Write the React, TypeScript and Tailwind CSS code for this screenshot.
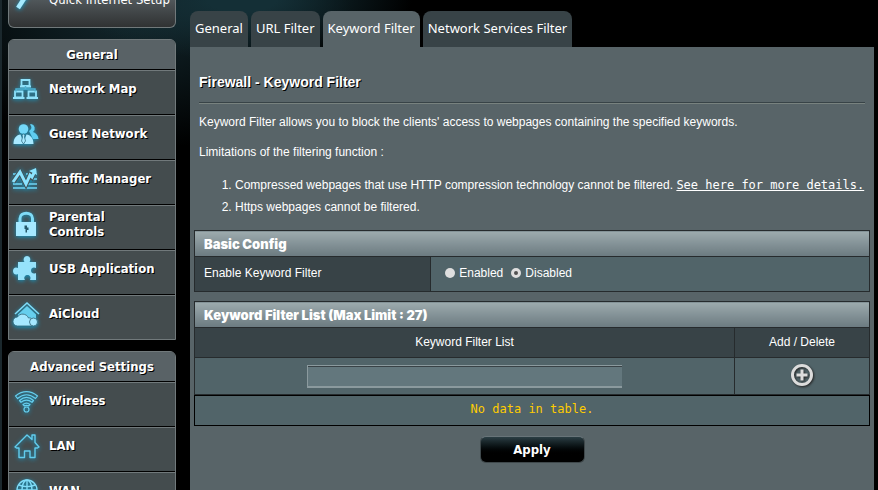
import type { ReactNode } from "react"

type MenuItem = { label: string; icon: ReactNode }

const tabs = ["General", "URL Filter", "Keyword Filter", "Network Services Filter"]

const glow = "h-[30px] w-[30px] shrink-0 drop-shadow-[0_1px_2px_#1599c4]"

function WandIcon() {
    return (
        <svg viewBox="0 0 30 30" className={glow} fill="none">
            <path d="M7 23 18 6" stroke="#a5eaff" strokeWidth="4.500" />
        </svg>
    )
}

function MapIcon() {
    return (
        <svg viewBox="0 0 30 30" className={glow} fill="none" stroke="#8fe2fb" strokeWidth="1.800">
            <path d="M10.500 6h8v6h-8zM4 17.500h7.500v6H4zM17.500 17.500H25v6h-7.500z" />
            <path d="M9 12.500h11M2 24h11.500M15.500 24H27" />
            <path d="M14.500 12v3M5 17.500V15h19v2.500" stroke="#4fb4d4" strokeWidth="1.500" />
        </svg>
    )
}

function GuestIcon() {
    return (
        <svg viewBox="0 0 30 30" className={glow}>
            <path d="M20 5a4.500 4.500 0 0 1 2 8c3 1 5 3 5.500 7H22l-4-8c3-2 3-4 1-6.500z" fill="#5fcdf0" />
            <circle cx="12.500" cy="10" r="4.800" fill="#74d8f8" />
            <path d="M2.500 25c0-6 3-9 7-9.500l3 8 3-8c4 .5 7 3.500 7 9.500z" fill="#a8e9ff" />
            <path d="m11 16 1.500-1 1.500 1-.5 2 1 4-2 3-2-3 1-4z" fill="#a8e9ff" stroke="#2a6478" strokeWidth=".7" />
        </svg>
    )
}

function TrafficIcon() {
    return (
        <svg viewBox="0 0 30 30" className={glow} fill="none" stroke="#6fd6f8">
            <path d="M2 10h3M15 10h4M2 15h3M21 15h5M2 20h9M17 20h9M2 24h24" strokeWidth="1.700" />
            <path d="m2 18 7-10 6 12 4-9 2 2 3-6" stroke="#455053" strokeWidth="5" />
            <path d="m2 18 7-10 6 12 4-9 2 2 3-6" stroke="#8ae3ff" strokeWidth="3" />
            <path d="m18 7 7-3 1 7z" fill="#8ae3ff" stroke="none" />
        </svg>
    )
}

function LockIcon() {
    return (
        <svg viewBox="0 0 30 30" className={glow} fill="none">
            <path d="M9 14V9.500c0-7 12.500-7 12.500 0V14" stroke="#7fdcf8" strokeWidth="3" />
            <path d="M5 13h20v14H5z" fill="#a5e8ff" />
            <path d="M13.500 16.500H16v2h1.500V21H16v2.500h-1.500V20h-1z" fill="#24586a" />
        </svg>
    )
}

function PuzzleIcon() {
    return (
        <svg viewBox="0 0 30 30" className={glow}>
            <path
                d="M7 8h6.500c-2-3 0-6 2.500-6s4.500 3 2.500 6H25v6c-2.500-1.500-5 0-5 2.500s2.500 4 5 2.500v7h-6c1.500-3-.5-5-2.500-5s-4.500 2-2.500 5H7v-6c-3 1.500-5-.5-5-3s2-4.500 5-3z"
                fill="#96e2fb"
            />
        </svg>
    )
}

function CloudHomeIcon() {
    return (
        <svg viewBox="0 0 30 30" className={glow}>
            <path d="m4 15 12-11 12 11" fill="none" stroke="#7fdcf8" strokeWidth="1.600" />
            <path d="m7 15.500 9-8.500 9 8.500V24H7z" fill="#66cfee" />
            <path
                d="M6.500 27c-6 0-6-9 0-9 2-4 9-4 11 1 2-.5 3 .5 3.500 1.500V27z"
                fill="#a5e8ff"
                stroke="#2f6375"
                strokeWidth=".8"
            />
            <circle cx="22.500" cy="23" r="4" fill="#a5e8ff" stroke="#2f6375" strokeWidth=".8" />
        </svg>
    )
}

function WifiIcon() {
    return (
        <svg viewBox="0 0 30 30" className={glow} fill="none" stroke="#66cfef" strokeWidth="1.200" strokeLinejoin="round">
            <path d="M4.500 10c7-5.500 15-5.500 22 0l-2 2.500c-6-5-12-5-18 0z" />
            <path d="M8.500 14.500c4.500-4 9.500-4 14 0L21 16.300c-4-3-7-3-11 0z" />
            <path d="M12 18.500c2.500-2 4.500-2 7 0L17.500 20c-1.500-1-2.500-1-4 0z" />
            <circle cx="15.500" cy="23.500" r="2.500" />
        </svg>
    )
}

function HouseIcon() {
    return (
        <svg viewBox="0 0 30 30" className={glow} fill="none" stroke="#62cdee" strokeWidth="1.400" strokeLinejoin="round">
            <path d="M4 16 16 4l5 4.500V4h3v7.500l4 4.500-1.500 1H24v9.500h-5V20h-5.500v6.500H8V17H5.500z" />
        </svg>
    )
}

function GlobeIcon() {
    return (
        <svg viewBox="0 0 30 30" className={glow} fill="none" stroke="#7fdcf8" strokeWidth="1.400">
            <circle cx="16" cy="14" r="10" />
            <ellipse cx="16" cy="14" rx="5" ry="10" />
            <path d="M16 4v20M6 14h20M8 9c5 2 11 2 16 0M8 19c5-2 11-2 16 0" />
        </svg>
    )
}

const general: MenuItem[] = [
    { label: "Network Map", icon: <MapIcon /> },
    { label: "Guest Network", icon: <GuestIcon /> },
    { label: "Traffic Manager", icon: <TrafficIcon /> },
    { label: "Parental Controls", icon: <LockIcon /> },
    { label: "USB Application", icon: <PuzzleIcon /> },
    { label: "AiCloud", icon: <CloudHomeIcon /> },
]

const advanced: MenuItem[] = [
    { label: "Wireless", icon: <WifiIcon /> },
    { label: "LAN", icon: <HouseIcon /> },
    { label: "WAN", icon: <GlobeIcon /> },
]

function Menu({ title, items }: { title: string; items: MenuItem[] }) {
    return (
        <nav className="shrink-0 overflow-hidden rounded-t-md border border-[#71797b] bg-[#444c4e]">
            <h2 className="flex h-[30px] items-center justify-center border-b border-black bg-[#596266] text-[13px]">
                {title}
            </h2>
            {items.map((item) => (
                <a
                    key={item.label}
                    href="#"
                    className="flex h-[45px] items-center gap-2 border-t border-b border-t-[#71797b] border-b-black pr-4 pb-2 pl-0.5 last:h-11 last:border-b-0"
                >
                    {item.icon}
                    <span className="text-[13px] leading-[15px]">{item.label}</span>
                </a>
            ))}
        </nav>
    )
}

function Sidebar() {
    return (
        <aside className="flex w-[168px] shrink-0 flex-col gap-[11px] font-['DejaVu_Sans_Condensed','DejaVu_Sans',sans-serif] font-bold text-white text-shadow-[1px_1px_0_#000]">
            <a
                href="#"
                className="flex h-7 shrink-0 items-end overflow-hidden rounded-b-md border border-t-0 border-[#71797b] bg-linear-to-b from-[#50575a] to-[#303233]"
            >
                <span className="flex items-center gap-2 pb-3 pl-0.5">
                    <WandIcon />
                    <span className="text-[13px] font-normal whitespace-nowrap text-shadow-none">Quick Internet Setup</span>
                </span>
            </a>
            <Menu title="General" items={general} />
            <Menu title="Advanced Settings" items={advanced} />
        </aside>
    )
}

function AddIcon() {
    return (
        <svg viewBox="0 0 24 24" className="h-6 w-6 drop-shadow-[1px_1px_1px_#222]" fill="none">
            <circle cx="12" cy="12" r="9.500" stroke="#dcdcdc" strokeWidth="3" />
            <path d="M12 6.500v11M6.500 12h11" stroke="#dcdcdc" strokeWidth="3" />
        </svg>
    )
}

const heading =
    "h-[26px] border border-[#262b2d] bg-linear-to-b from-[#9dabae] to-[#6b7a80] px-[9px] text-left font-['Inter',sans-serif] text-[13px] leading-4 font-black"
const darkCell = "border border-[#262b2d] bg-[#384347]"
const lightCell = "border border-[#262b2d] bg-[#516469]"
const radio =
    "h-[10px] w-[10px] appearance-none rounded-full bg-[#dedede] checked:border-[3px] checked:border-[#dedede] checked:bg-[#505050]"

function BasicConfig() {
    return (
        <table className="w-full border-collapse">
            <thead>
                <tr>
                    <th colSpan={2} className={heading}>Basic Config</th>
                </tr>
            </thead>
            <tbody>
                <tr className="h-[35px]">
                    <th className={`${darkCell} w-[35%] px-[9px] pb-0.5 text-left font-normal`}>Enable Keyword Filter</th>
                    <td className={`${lightCell} px-3.5 pb-0.5`}>
                        <div className="flex items-center gap-2">
                            <label className="flex items-center gap-1">
                                <input type="radio" name="keyword_filter" className={radio} />
                                Enabled
                            </label>
                            <label className="flex items-center gap-1">
                                <input type="radio" name="keyword_filter" defaultChecked className={radio} />
                                Disabled
                            </label>
                        </div>
                    </td>
                </tr>
            </tbody>
        </table>
    )
}

function KeywordList() {
    return (
        <div>
            <table className="w-full border-collapse">
                <thead>
                    <tr>
                        <th colSpan={2} className={heading}>Keyword Filter List (Max Limit : 27)</th>
                    </tr>
                    <tr className="h-[30px]">
                        <th className={`${darkCell} w-4/5 pb-0.5 font-normal`}>Keyword Filter List</th>
                        <th className={`${darkCell} w-1/5 pb-0.5 font-normal`}>Add / Delete</th>
                    </tr>
                </thead>
                <tbody>
                    <tr className="h-[37px]">
                        <td className={lightCell}>
                            <input
                                type="text"
                                aria-label="Keyword"
                                className="mx-auto block h-[23px] w-[315px] border-t border-b-2 border-l border-[#8b9a9e] bg-[#63777d] px-1 shadow-[inset_0_1px_0_#394246] outline-none"
                            />
                        </td>
                        <td className={lightCell}>
                            <button type="button" aria-label="Add" className="mx-auto block pb-0.5">
                                <AddIcon />
                            </button>
                        </td>
                    </tr>
                </tbody>
            </table>
            <p className="flex h-[31px] items-center justify-center border border-black bg-[#516469] pb-1 font-['DejaVu_Sans_Mono',monospace] text-[#ffcc00]">
                No data in table.
            </p>
        </div>
    )
}

export default function App() {
    return (
        <div className="flex h-screen gap-3.5 overflow-hidden border-l-2 border-[#1b282d] bg-black bg-[radial-gradient(ellipse_170px_60px_at_240px_0px,#142f36_20%,transparent),radial-gradient(ellipse_220px_140px_at_130px_10px,#14292f,transparent)] pr-1 pl-1.5 font-['Liberation_Sans',Arial,sans-serif] text-[12px] text-white">
            <Sidebar />
            <main className="flex min-w-0 flex-1 flex-col pt-[11px]">
                <div className="flex gap-[3px] font-['Noto_Sans',sans-serif] text-[13px]">
                    {tabs.map((tab) => (
                        <a
                            key={tab}
                            href="#"
                            className={`flex h-9 items-center rounded-t-lg px-[5px] whitespace-nowrap ${tab === "Keyword Filter" ? "bg-[#586468]" : "bg-[#384347]"}`}
                        >
                            {tab}
                        </a>
                    ))}
                </div>
                <div className="flex-1 bg-[#586468] px-1 pt-[26px]">
                    <div className="px-[5px]">
                        <h1 className="border-b border-[#384347] pb-2.5 text-[14px] leading-[19px] font-bold text-shadow-[1px_1px_0_#000]">
                            Firewall - Keyword Filter
                        </h1>
                        <div className="border-t border-[#78827f] pt-2.5 leading-4">
                            <p>
                                Keyword Filter allows you to block the clients' access to webpages containing the specified keywords.
                            </p>
                            <p className="mt-3.5">Limitations of the filtering function :</p>
                            <ol className="mt-[14px] ml-9 list-decimal leading-[22px]">
                                <li className="whitespace-nowrap">
                                    Compressed webpages that use HTTP compression technology cannot be filtered.{" "}
                                    <a href="#" className="font-['DejaVu_Sans_Mono',monospace] underline">
                                        See here for more details.
                                    </a>
                                </li>
                                <li>Https webpages cannot be filtered.</li>
                            </ol>
                        </div>
                    </div>
                    <div className="mt-3 flex flex-col gap-[9px]">
                        <BasicConfig />
                        <KeywordList />
                    </div>
                    <button
                        type="button"
                        className="mx-auto mt-[10px] block h-[27px] w-[105px] rounded-md border border-t-[#687479] border-r-[#3f484b] border-b-[#3f484b] border-l-[#3f484b] bg-linear-to-b from-[#2b3e44] to-black to-75% font-['DejaVu_Sans_Condensed','DejaVu_Sans',sans-serif] text-[13px] font-bold text-shadow-[1px_1px_0_#000]"
                    >
                        Apply
                    </button>
                </div>
            </main>
        </div>
    )
}
